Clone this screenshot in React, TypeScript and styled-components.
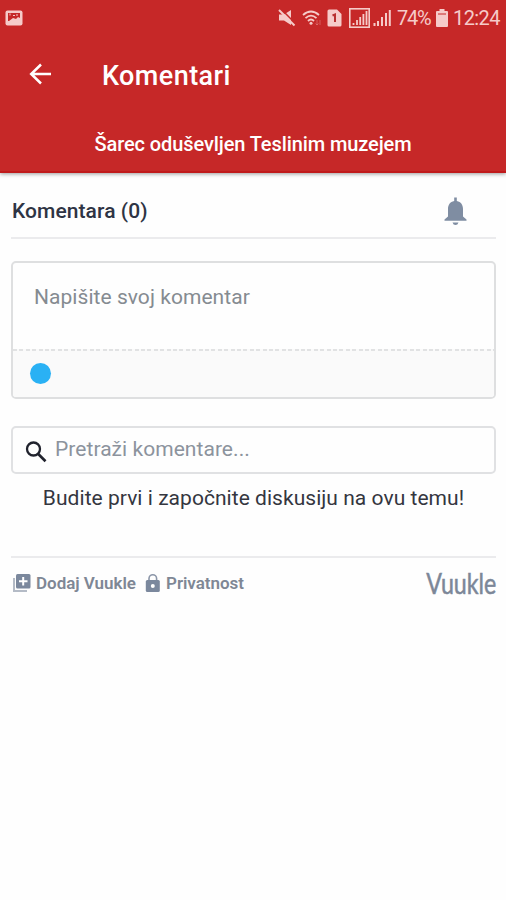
import React from "react";
import styled, { createGlobalStyle } from "styled-components";

const GlobalStyle = createGlobalStyle`
  * { box-sizing: border-box; }
  body { margin: 0; background: #fefefe; font-family: Roboto, "Liberation Sans", sans-serif; }
`;

const Screen = styled.div`
  width: 506px;
  height: 900px;
  overflow: hidden;
  background: #fefefe;
`;

const Header = styled.header`
  height: 173px;
  background: #c62828;
  border-bottom: 2px solid #c01a1c;
  box-shadow: 0 1px 4px rgba(0, 0, 0, 0.4);
  color: #fff;
`;

const StatusBar = styled.div`
  display: flex;
  align-items: center;
  justify-content: space-between;
  height: 36px;
  padding: 0 7px 0 5px;
  color: #f6cbc9;
`;

const StatusGroup = styled.div`
  display: flex;
  align-items: center;
`;

const StatusIcon = styled.svg<{ $gap?: number }>`
  display: block;
  flex: none;
  margin-right: ${(p) => p.$gap ?? 0}px;
`;

const StatusText = styled.span<{ $width: number; $gap?: number; $tracking: number }>`
  width: ${(p) => p.$width}px;
  margin-right: ${(p) => p.$gap ?? 0}px;
  font-size: 20px;
  line-height: 36px;
  letter-spacing: ${(p) => p.$tracking}px;
  white-space: nowrap;
`;

const Toolbar = styled.div`
  display: flex;
  align-items: center;
  height: 76px;
  padding-left: 29px;
`;

const Title = styled.h1`
  margin: 3px 0 0 51px;
  font-size: 27px;
  line-height: 32px;
  font-weight: 500;
  letter-spacing: 0.42px;
`;

const Subtitle = styled.div`
  padding-top: 20px;
  text-align: center;
  font-size: 20px;
  line-height: 24px;
  font-weight: 500;
  letter-spacing: -0.1px;
`;

const Content = styled.main`
  padding: 0 10px 0 11px;
`;

const CountRow = styled.div`
  display: flex;
  align-items: center;
  justify-content: space-between;
  height: 66px;
  padding: 12px 29px 0 1px;
  border-bottom: 2px solid #ebebed;
`;

const Count = styled.h2`
  margin: 0;
  font-size: 21px;
  line-height: 24px;
  font-weight: 500;
  letter-spacing: 0.08px;
  color: #2e3444;
`;

const Composer = styled.div`
  height: 138px;
  margin-top: 22px;
  border: 2px solid #dedfe0;
  border-radius: 5px;
  overflow: hidden;
`;

const ComposerInput = styled.div`
  height: 86px;
  padding: 22px 0 0 21px;
  font-size: 21px;
  line-height: 24px;
  letter-spacing: 0.05px;
  color: #858b91;
`;

const ComposerFooter = styled.div`
  display: flex;
  align-items: center;
  height: 48px;
  padding: 1px 0 0 17px;
  background:
    repeating-linear-gradient(90deg, #e1e2e3 0 4px, transparent 4px 6.4px) top / 100% 2px no-repeat,
    #fafafa;
`;

const Avatar = styled.span`
  width: 21px;
  height: 21px;
  border-radius: 50%;
  background: #2ab1f4;
`;

const SearchBox = styled.div`
  display: flex;
  align-items: center;
  height: 48px;
  margin-top: 27px;
  padding-left: 12px;
  border: 2px solid #e0e1e3;
  border-radius: 5px;
`;

const SearchIcon = styled.svg`
  display: block;
  margin-top: 3px;
`;

const SearchLabel = styled.span`
  margin: -3px 0 0 8px;
  font-size: 21px;
  line-height: 24px;
  letter-spacing: 0.05px;
  color: #8c939d;
`;

const EmptyText = styled.p`
  margin: 12px 0 0;
  text-align: center;
  font-size: 21px;
  line-height: 24px;
  letter-spacing: 0.04px;
  color: #34363f;
`;

const Footer = styled.footer`
  display: flex;
  align-items: center;
  height: 52px;
  margin-top: 46px;
  border-top: 2px solid #ebebed;
  color: #7f8795;
`;

const FooterLink = styled.span<{ $width: number }>`
  display: flex;
  align-items: center;
  gap: 5px;
  width: ${(p) => p.$width}px;
  font-size: 17px;
  font-weight: 600;
  letter-spacing: -0.03px;
  white-space: nowrap;
`;

const Brand = styled.span`
  margin-left: auto;
  font-family: Lato, sans-serif;
  font-size: 28px;
  line-height: 32px;
  color: #7c8798;
  -webkit-text-stroke: 0.5px #7c8798;
  transform: scaleX(0.83);
  transform-origin: right center;
`;

export default function App() {
  return (
    <Screen>
      <GlobalStyle />
      <Header>
        <StatusBar>
          <StatusIcon width="18" height="16" viewBox="0 0 18 16">
            <rect x="0.5" y="0.5" width="17" height="15" rx="2" fill="currentColor" />
            <path d="M3 3h12v5l-2-1-2 2-3-1-4 3H3z" fill="#c62828" />
            <path d="M5 3.5v2M8 5.5h2M12 4v2" stroke="currentColor" strokeWidth="1" />
          </StatusIcon>
          <StatusGroup>
            <StatusIcon $gap={6} width="18" height="18" viewBox="0 0 18 18">
              <path d="M1 5.500h5l7-4.500v15l-7-4.500H1z" fill="currentColor" />
              <path d="M3 0l15 15" stroke="#c62828" strokeWidth="1.5" />
              <path d="M1 1l15.500 15.500" stroke="currentColor" strokeWidth="2" />
            </StatusIcon>
            <StatusIcon $gap={5} width="20" height="18" viewBox="0 0 20 18">
              <g fill="none" stroke="currentColor" strokeWidth="1.8">
                <path d="M1 6Q9 -1 17 6M3.5 9.2Q9 4 14.5 9.2M6 12Q9 9 12 12" />
              </g>
              <circle cx="9" cy="14.3" r="1.5" fill="currentColor" />
              <path d="M15 11v5M13.5 14.5L15 16l1.5-1.5M18 16v-5" fill="none" stroke="currentColor" strokeWidth="0.8" opacity="0.4" />
            </StatusIcon>
            <StatusIcon $gap={7} width="15" height="18" viewBox="0 0 15 18">
              <path d="M2 .5h8l4.5 4.5v11a1.5 1.5 0 0 1-1.5 1.5H2A1.5 1.5 0 0 1 .5 16V2A1.5 1.5 0 0 1 2 .5z" fill="currentColor" />
              <path d="M5.5 6.5l2.5-1V13" fill="none" stroke="#b93030" strokeWidth="2" />
            </StatusIcon>
            <StatusIcon $gap={3} width="21" height="20" viewBox="0 0 21 20">
              <rect x="0.8" y="0.8" width="19.4" height="18.4" fill="none" stroke="currentColor" strokeWidth="1.6" />
              <path d="M4.5 17v-2M8 17v-5M11.2 17V9M14.4 17V6M17.5 17V3" stroke="currentColor" strokeWidth="1.8" />
            </StatusIcon>
            <StatusIcon $gap={6} width="18" height="18" viewBox="0 0 18 18">
              <path d="M1.5 17v-3M5 17v-5M9 17V8M13 17V4M16.8 17V1" stroke="currentColor" strokeWidth="2" />
            </StatusIcon>
            <StatusText $width={34} $gap={5} $tracking={-1.3}>74%</StatusText>
            <StatusIcon $gap={5} width="12" height="18" viewBox="0 0 12 18">
              <path d="M3.5 0h5v2H11a1 1 0 0 1 1 1v14a1 1 0 0 1-1 1H1a1 1 0 0 1-1-1V3a1 1 0 0 1 1-1h2.5z" fill="currentColor" />
              <path d="M2 5h8" stroke="#c62828" strokeWidth="1" />
            </StatusIcon>
            <StatusText $width={46} $tracking={-0.6}>12:24</StatusText>
          </StatusGroup>
        </StatusBar>
        <Toolbar>
          <svg width="22" height="22" viewBox="0 0 22 22">
            <path d="M12 1.5L2.2 11L12 20.5M2.2 11H22" fill="none" stroke="#fff" strokeWidth="2.5" />
          </svg>
          <Title>Komentari</Title>
        </Toolbar>
        <Subtitle>Šarec oduševljen Teslinim muzejem</Subtitle>
      </Header>
      <Content>
        <CountRow>
          <Count>Komentara (0)</Count>
          <svg width="23" height="29" viewBox="0 0 23 29">
            <path
              d="M10.200 0.500h2.600v3.500c4.200 0.700 6.200 4 6.200 8v7.500L22.500 22.500v1.200H0.500v-1.200L4 19.500v-7.500c0-4 2-7.300 6.200-8zM8.500 25.500h6q-0.800 2.500-3 2.500t-3-2.500z"
              fill="#7f8da2"
            />
          </svg>
        </CountRow>
        <Composer>
          <ComposerInput>Napišite svoj komentar</ComposerInput>
          <ComposerFooter>
            <Avatar />
          </ComposerFooter>
        </Composer>
        <SearchBox>
          <SearchIcon width="22" height="22" viewBox="0 0 22 22">
            <circle cx="8.500" cy="8" r="6.500" fill="none" stroke="#20222d" strokeWidth="2.300" />
            <path d="M13 12.800l7.500 7.400" stroke="#20222d" strokeWidth="2.600" />
          </SearchIcon>
          <SearchLabel>Pretraži komentare...</SearchLabel>
        </SearchBox>
        <EmptyText>Budite prvi i započnite diskusiju na ovu temu!</EmptyText>
        <Footer>
          <FooterLink $width={133}>
            <svg width="20" height="20" viewBox="0 0 20 20">
              <path d="M3 5v13h13" fill="none" stroke="#b4bbc6" strokeWidth="2" />
              <rect x="5" y="1" width="14.500" height="14.500" rx="1.500" fill="#7b889d" />
              <path d="M12.200 4v8.500M8 8.200h8.500" stroke="#fff" strokeWidth="2" />
            </svg>
            Dodaj Vuukle
          </FooterLink>
          <FooterLink $width={120}>
            <svg width="17" height="20" viewBox="0 0 17 20">
              <path d="M5 8V5.500a3.800 3.800 0 0 1 7.600 0V8" fill="none" stroke="#8b96a8" strokeWidth="1.600" />
              <rect x="1.800" y="7" width="14" height="12" rx="1.500" fill="#7b889d" />
              <circle cx="8.800" cy="13" r="2" fill="#fff" />
            </svg>
            Privatnost
          </FooterLink>
          <Brand>Vuukle</Brand>
        </Footer>
      </Content>
    </Screen>
  );
}
